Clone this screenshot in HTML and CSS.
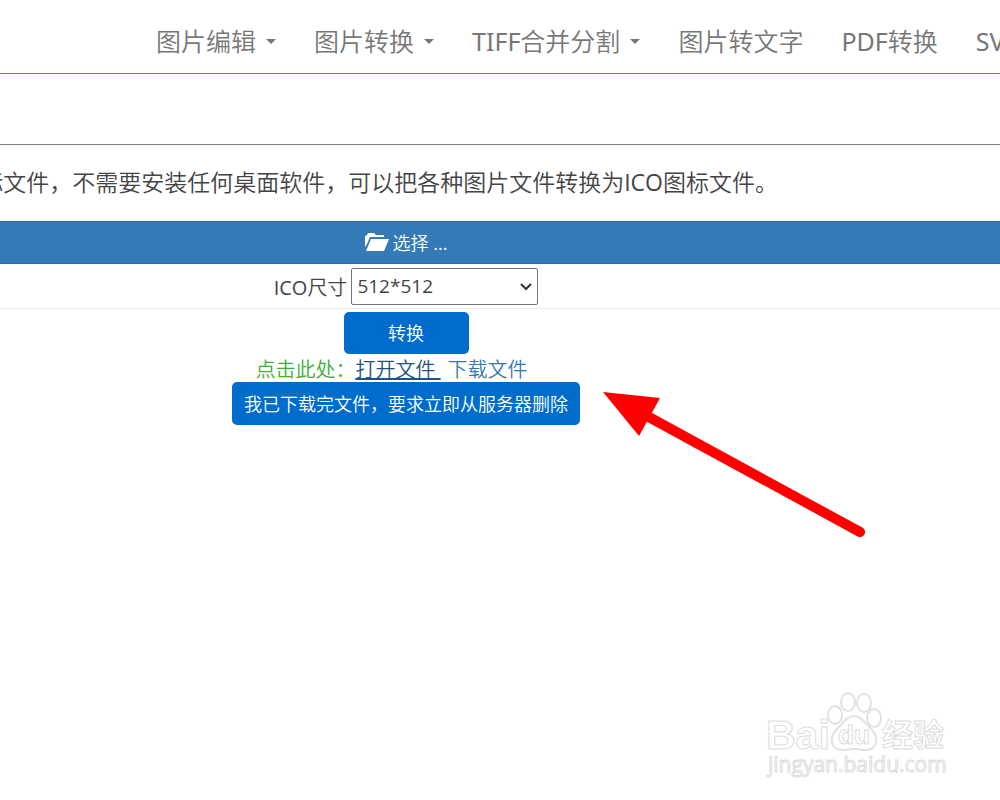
FILE: index.html
```html
<!DOCTYPE html>
<html lang="zh-CN">
<head>
<meta charset="utf-8">
<title>ICO图标转换</title>
<link rel="stylesheet" href="styles.css">
</head>
<body>
<nav class="navbar">
  <a class="nav-link" href="#">图片编辑<span class="caret"></span></a>
  <a class="nav-link" href="#">图片转换<span class="caret"></span></a>
  <a class="nav-link" href="#"><span><span class="latin">TIFF</span>合并分割</span><span class="caret"></span></a>
  <a class="nav-link" href="#">图片转文字</a>
  <a class="nav-link" href="#"><span><span class="latin">PDF</span>转换</span></a>
  <a class="nav-link" href="#"><span class="latin">SVG</span></a>
</nav>
<div class="banner"></div>
<main>
  <div class="intro"><p class="intro-text">标文件，不需要安装任何桌面软件，可以把各种图片文件转换为<span class="latin">ICO</span>图标文件。</p></div>
  <button class="choose" type="button">
    <svg class="folder" viewBox="0 0 24 18" aria-hidden="true"><path d="M0 14V3l2-1 1-2h6l2 2h8v2H5L2 11z"/><path d="M6 6h18l-5 12H1z"/></svg>
    <span>选择 <span class="latin">...</span></span>
  </button>
  <div class="row size-row">
    <label for="size"><span class="latin">ICO</span>尺寸</label>
    <div class="select-wrap">
      <select id="size" class="size"><option>512*512</option><option>256*256</option></select>
      <svg class="chevron" viewBox="0 0 12 8" aria-hidden="true"><path d="M1 1l5 5 5-5"/></svg>
    </div>
  </div>
  <div class="row action-row"><button class="btn convert" type="button">转换</button></div>
  <div class="row links">
    <span class="hint">点击此处：</span><a class="open" href="#">打开文件&nbsp;</a><a class="download" href="#">下载文件</a>
  </div>
  <div class="row"><button class="btn delete" type="button">我已下载完文件，要求立即从服务器删除</button></div>
</main>
<svg class="arrow" viewBox="0 0 264 148" aria-hidden="true">
  <path class="arrow-line" d="M44 24L257 140"/>
  <path class="arrow-head" d="M0 0l57 6-21 38z"/>
</svg>
<svg class="watermark" viewBox="0 0 190 100" role="img" aria-label="Baidu经验">
  <g class="mark">
    <ellipse cx="75" cy="25" rx="7" ry="9"/>
    <ellipse cx="88" cy="12" rx="7" ry="9"/>
    <ellipse cx="104" cy="13" rx="7" ry="9"/>
    <ellipse cx="114" cy="28" rx="7" ry="9"/>
    <path d="M94 26c-8 0-11 8-17 13-8 7-7 21 5 21 5 0 8-1 12-1s7 1 12 1c12 0 13-14 5-21-6-5-9-13-17-13z"/>
    <text class="brand" x="6" y="59">Bai</text>
    <text class="du" x="78" y="54">du</text>
    <text class="cn" x="122" y="56">经验</text>
    <text class="site" x="8" y="82">jingyan.baidu.com</text>
  </g>
</svg>
</body>
</html>
```
FILE: styles.css
```css
* { box-sizing: border-box; }
body {
  margin: 0;
  min-height: 100vh;
  position: relative;
  overflow-x: hidden;
  background: #fff;
  color: #444;
  font-family: "Open Sans", "Noto Sans CJK SC", sans-serif;
  font-size: 20px;
  font-weight: 350;
}
button, select { font: inherit; }
a { text-decoration: none; }
.latin { font-weight: 400; }
.navbar {
  display: flex;
  gap: 38px;
  height: 74px;
  padding: 23px 0 0 156px;
  overflow: hidden;
  border-bottom: 1px solid #1b9bd8;
  white-space: nowrap;
}
.nav-link {
  display: flex;
  align-items: center;
  gap: 10px;
  height: 36px;
  flex: none;
  color: #777;
  font-size: 25px;
  line-height: 36px;
}
.nav-link .latin { font-family: "Noto Sans", sans-serif; }
.caret {
  border: 5px solid transparent;
  border-top-color: #777;
  border-bottom: 0;
}
.banner { height: 71px; border-bottom: 1px solid #808080; }
.intro {
  display: flex;
  justify-content: flex-end;
  padding: 18px 222px 20px 0;
}
.intro-text {
  margin: 0;
  font-size: 23px;
  line-height: 38px;
  white-space: nowrap;
}
.choose {
  display: flex;
  align-items: center;
  justify-content: center;
  gap: 4px;
  width: 100%;
  height: 43px;
  padding: 0 188px 2px 0;
  border: solid #2e6da4;
  border-width: 1px 0;
  background: #337ab7;
  color: #fff;
  font-size: 18px;
}
.folder { width: 24px; height: 18px; fill: #fff; }
.row {
  display: flex;
  align-items: center;
  justify-content: center;
  padding-right: 188px;
}
.size-row {
  gap: 4px;
  height: 45px;
  border-bottom: 1px solid #e3eef5;
}
.select-wrap { position: relative; }
.size {
  display: block;
  width: 187px;
  height: 37px;
  padding: 0 5px;
  appearance: none;
  border: 1px solid #767676;
  border-radius: 2px;
  background: #fff;
  color: #444;
  font-size: 19px;
  font-weight: 400;
}
.chevron {
  position: absolute;
  right: 6px;
  top: 15px;
  width: 12px;
  height: 8px;
  fill: none;
  stroke: #333;
  stroke-width: 2;
  pointer-events: none;
}
.action-row { padding-top: 3px; }
.btn {
  height: 42px;
  padding: 0 12px 2px;
  border: 0;
  border-radius: 5px;
  background: #006dcc;
  color: #fff;
  font-size: 18px;
}
.convert { width: 125px; }
.delete { height: 43px; }
.links { height: 28px; padding-right: 217px; }
.hint { color: #3cb034; }
.open { color: #23527c; text-decoration: underline; }
.download { margin-left: 7px; color: #337ab7; }
.arrow {
  position: absolute;
  left: 603px;
  top: 392px;
  width: 264px;
  height: 148px;
}
.arrow-line { stroke: #f00; stroke-width: 10; stroke-linecap: round; }
.arrow-head { fill: #f00; }
.watermark {
  position: absolute;
  right: 50px;
  bottom: 10px;
  width: 190px;
  height: 100px;
}
.mark { fill: #fff; stroke: #ddd; stroke-width: 1; }
.mark ellipse, .mark path { stroke-width: 2; stroke: #e2e2e2; }
.brand { font: 700 41px "Liberation Sans", sans-serif; }
.du { font: 700 26px "Liberation Sans", sans-serif; }
.cn { font: 700 31px "Noto Sans CJK SC", sans-serif; }
.site { font: 400 21px "Open Sans", sans-serif; }
```
